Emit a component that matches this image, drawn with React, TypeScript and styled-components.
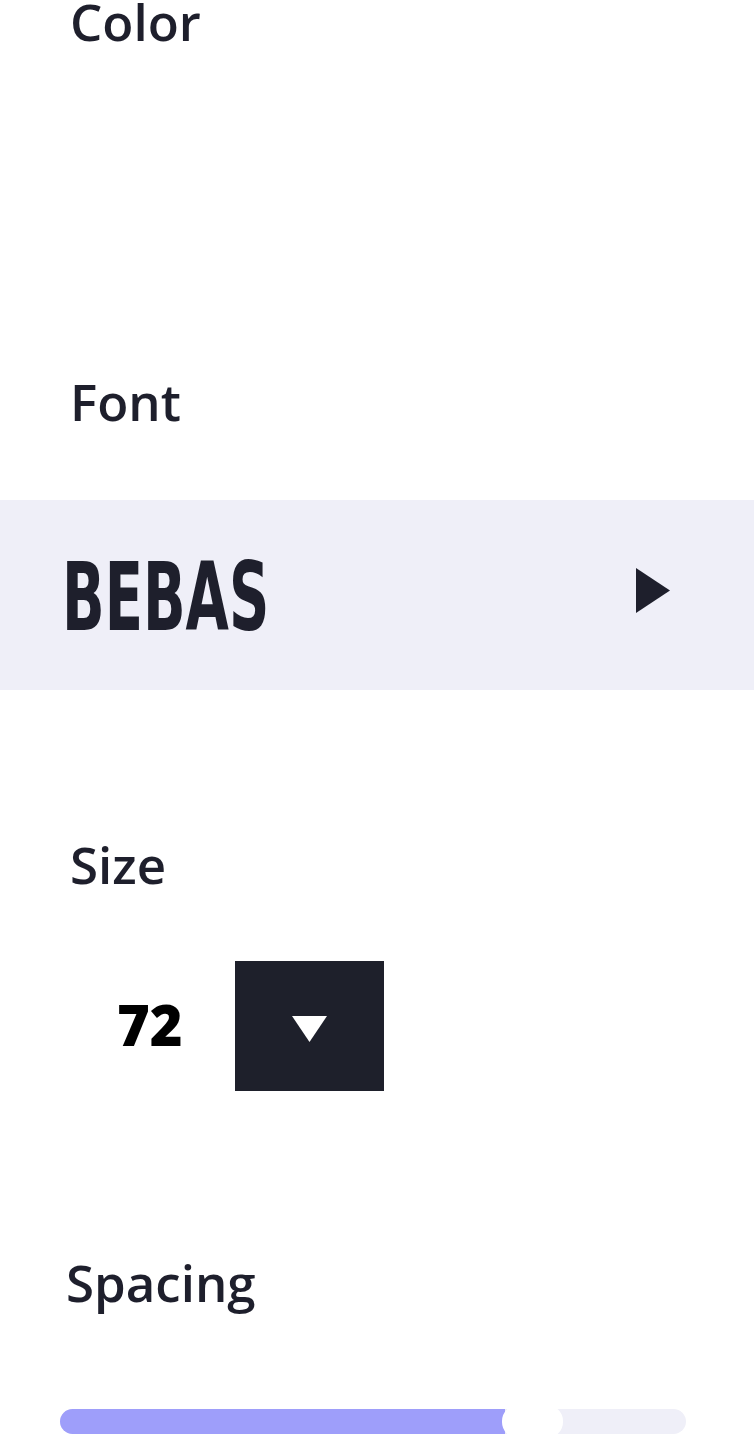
import React from "react";
import styled, { createGlobalStyle } from "styled-components";

const Global = createGlobalStyle`
  html, body { margin: 0; padding: 0; background: #ffffff; }
  body { font-family: "Open Sans", "Noto Sans", sans-serif; color: #1e1f2c; }
`;

const Page = styled.div`
  width: 754px;
  height: 1453px;
  overflow: hidden;
  display: flex;
  flex-direction: column;
`;

const Label = styled.div<{ $left?: number; $top?: number }>`
  font-family: "Open Sans", "Noto Sans", sans-serif;
  font-weight: 600;
  font-size: 51px;
  line-height: 42px;
  color: #1e1f2c;
  margin-left: ${(p) => p.$left ?? 70}px;
  margin-top: ${(p) => p.$top ?? 0}px;
`;

const ColorSection = styled.section`
  min-height: 380px;
`;

const FontBand = styled.button`
  margin-top: 78px;
  height: 190px;
  width: 100%;
  border: none;
  background: #efeff8;
  display: flex;
  align-items: center;
  justify-content: space-between;
  padding: 0 84px 0 62px;
  box-sizing: border-box;
  cursor: pointer;
`;

const FontName = styled.span`
  font-family: "DejaVu Sans Condensed", "DejaVu Sans", sans-serif;
  font-stretch: condensed;
  font-weight: 700;
  font-size: 95px;
  line-height: 1;
  color: #1e1f2c;
  display: inline-block;
  transform: scaleX(0.655);
  transform-origin: left center;
  padding-top: 5px;
`;

const Arrow = styled.svg`
  margin-bottom: 9px;
`;

const SizeRow = styled.div`
  margin-top: 76px;
  display: flex;
  align-items: center;
  height: 130px;
`;

const SizeValue = styled.span`
  font-family: "Open Sans", sans-serif;
  font-weight: 800;
  font-size: 56px;
  line-height: 1;
  color: #000;
  margin-left: 117px;
  width: 118px;
  padding-bottom: 4px;
`;

const DropButton = styled.button`
  width: 149px;
  height: 130px;
  border: none;
  background: #1e202b;
  display: flex;
  align-items: center;
  justify-content: center;
  padding: 0;
  cursor: pointer;
`;

const DropArrow = styled.svg`
  margin-top: 6px;
`;

const Track = styled.div`
  position: relative;
  margin-top: 106px;
  margin-left: 60px;
  width: 626px;
  height: 25px;
  border-radius: 13px;
  background: #efeff8;
`;

const Fill = styled.div`
  height: 100%;
  border-radius: 13px 0 0 13px;
  background: #9e9efa;
`;

const Thumb = styled.div`
  position: absolute;
  top: -4px;
  width: 61px;
  height: 33px;
  border-radius: 16px;
  background: #ffffff;
`;

export default function App() {
  const fillWidth = 445;
  return (
    <>
      <Global />
      <Page>
        <ColorSection>
          <Label>Color</Label>
        </ColorSection>
        <Label>Font</Label>
        <FontBand>
          <FontName>BEBAS</FontName>
          <Arrow width="34" height="45" viewBox="0 0 34 45">
            <polygon points="0,0 34,22.5 0,45" fill="#1e1f2c" />
          </Arrow>
        </FontBand>
        <Label $top={153}>Size</Label>
        <SizeRow>
          <SizeValue>72</SizeValue>
          <DropButton>
            <DropArrow width="35" height="26" viewBox="0 0 35 26">
              <polygon points="0,0 35,0 17.5,26" fill="#ffffff" />
            </DropArrow>
          </DropButton>
        </SizeRow>
        <Label $left={66} $top={170}>Spacing</Label>
        <Track>
          <Fill style={{ width: fillWidth }} />
          <Thumb style={{ left: fillWidth - 3 }} />
        </Track>
      </Page>
    </>
  );
}
